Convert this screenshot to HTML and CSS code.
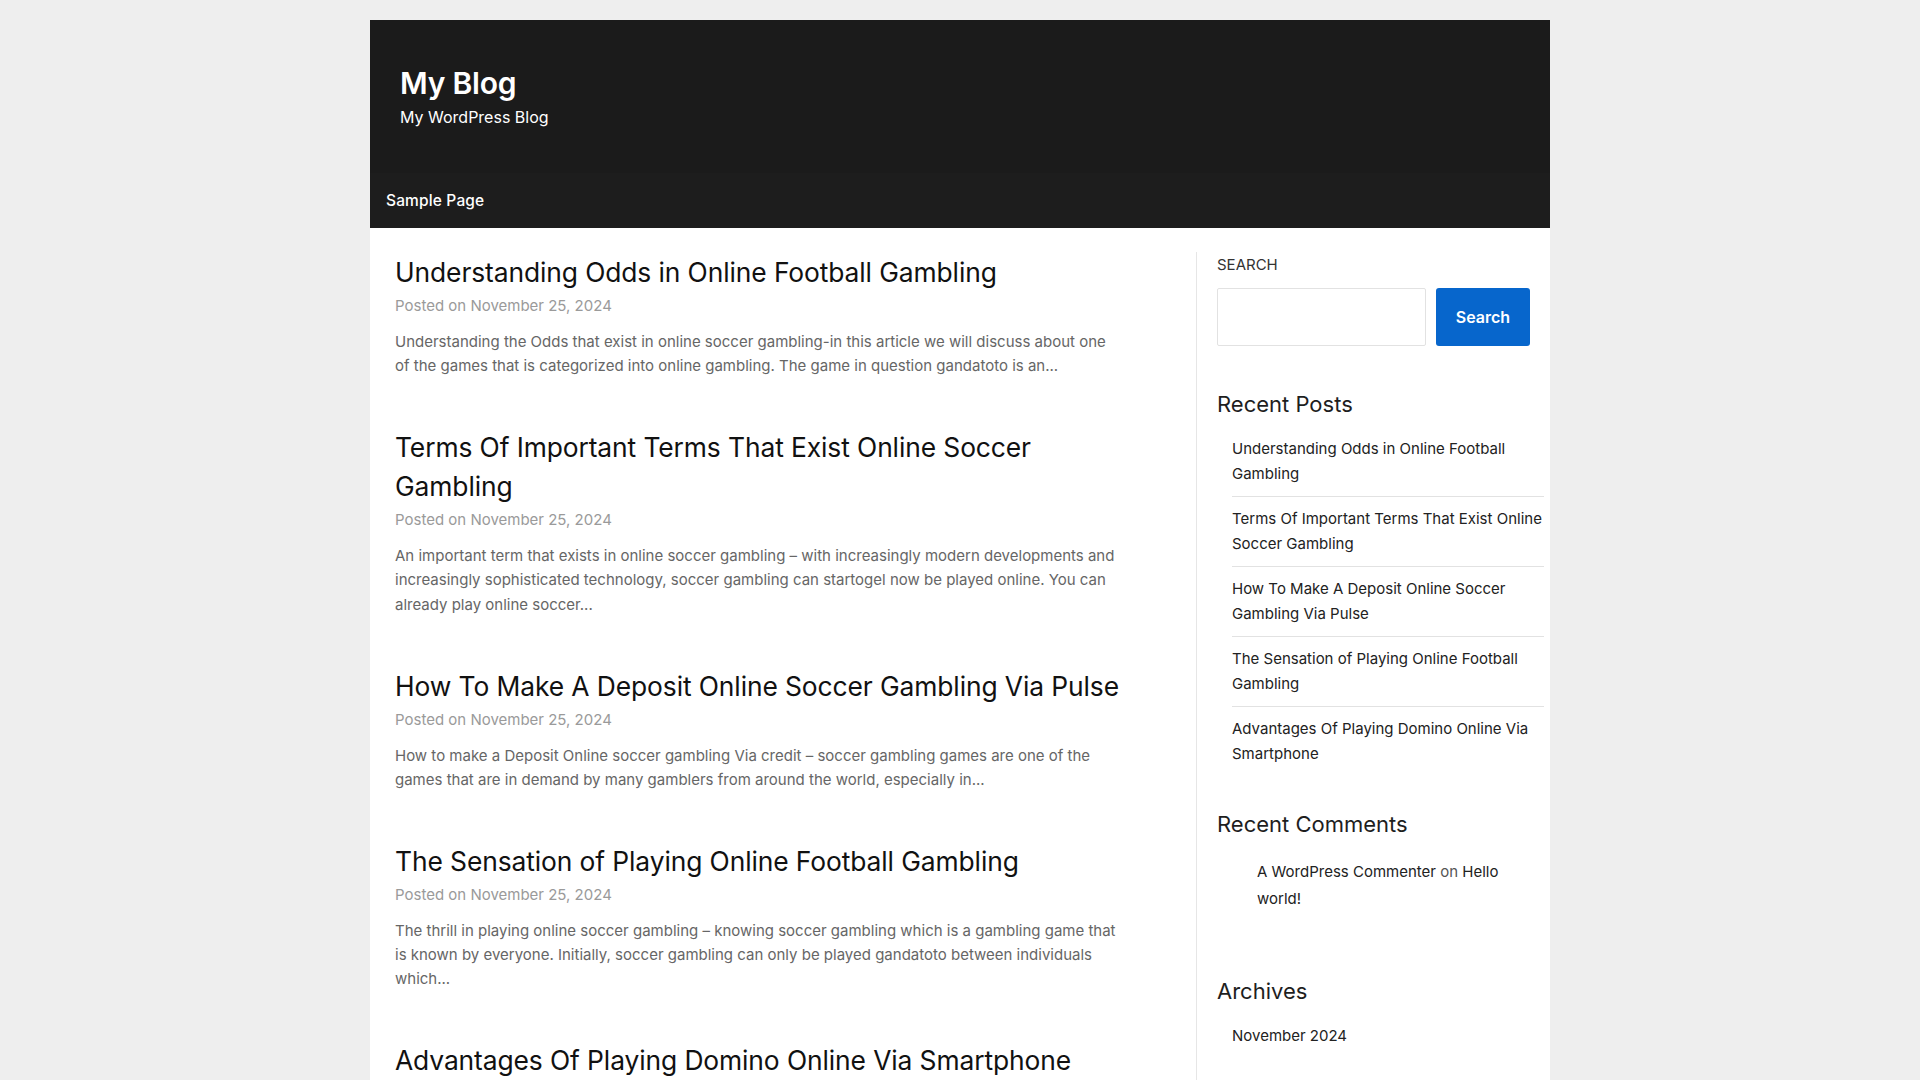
FILE: index.html
```html
<!DOCTYPE html>
<html lang="en">
<head>
<meta charset="utf-8">
<title>My Blog – My WordPress Blog</title>
<link rel="stylesheet" href="styles.css">
</head>
<body>
<div class="page">
  <header class="site-header">
    <div class="branding">
      <h1 class="site-title">My Blog</h1>
      <p class="site-tagline">My WordPress Blog</p>
    </div>
    <nav class="main-nav">
      <a href="#" class="nav-link">Sample Page</a>
    </nav>
  </header>

  <div class="content-row">
    <main class="main-col">
      <article class="post">
        <h2 class="post-title">Understanding Odds in Online Football Gambling</h2>
        <div class="post-meta">Posted on November 25, 2024</div>
        <p class="post-excerpt">Understanding the Odds that exist in online soccer gambling-in this article we will discuss about one of the games that is categorized into online gambling. The game in question gandatoto is an...</p>
      </article>
      <article class="post">
        <h2 class="post-title">Terms Of Important Terms That Exist Online Soccer Gambling</h2>
        <div class="post-meta">Posted on November 25, 2024</div>
        <p class="post-excerpt">An important term that exists in online soccer gambling – with increasingly modern developments and increasingly sophisticated technology, soccer gambling can startogel now be played online. You can already play online soccer...</p>
      </article>
      <article class="post">
        <h2 class="post-title">How To Make A Deposit Online Soccer Gambling Via Pulse</h2>
        <div class="post-meta">Posted on November 25, 2024</div>
        <p class="post-excerpt">How to make a Deposit Online soccer gambling Via credit – soccer gambling games are one of the games that are in demand by many gamblers from around the world, especially in...</p>
      </article>
      <article class="post">
        <h2 class="post-title">The Sensation of Playing Online Football Gambling</h2>
        <div class="post-meta">Posted on November 25, 2024</div>
        <p class="post-excerpt">The thrill in playing online soccer gambling – knowing soccer gambling which is a gambling game that is known by everyone. Initially, soccer gambling can only be played gandatoto between individuals which...</p>
      </article>
      <article class="post">
        <h2 class="post-title">Advantages Of Playing Domino Online Via Smartphone</h2>
        <div class="post-meta">Posted on November 25, 2024</div>
        <p class="post-excerpt">Advantages of playing domino online via smartphone – domino games are one of the card games that are very popular and are often played by many people...</p>
      </article>
    </main>

    <aside class="sidebar">
      <section class="widget widget-search">
        <div class="search-label">SEARCH</div>
        <form class="search-form">
          <input class="search-input" type="text" aria-label="Search">
          <button class="search-button" type="button">Search</button>
        </form>
      </section>

      <section class="widget">
        <h3 class="widget-title">Recent Posts</h3>
        <ul class="post-list">
          <li><a href="#">Understanding Odds in Online Football Gambling</a></li>
          <li><a href="#">Terms Of Important Terms That Exist Online Soccer Gambling</a></li>
          <li><a href="#">How To Make A Deposit Online Soccer Gambling Via Pulse</a></li>
          <li><a href="#">The Sensation of Playing Online Football Gambling</a></li>
          <li><a href="#">Advantages Of Playing Domino Online Via Smartphone</a></li>
        </ul>
      </section>

      <section class="widget widget-comments">
        <h3 class="widget-title">Recent Comments</h3>
        <ul class="comment-list">
          <li><a href="#">A WordPress Commenter</a> <span class="on">on</span> <a href="#">Hello world!</a></li>
        </ul>
      </section>

      <section class="widget">
        <h3 class="widget-title">Archives</h3>
        <ul class="archive-list">
          <li><a href="#">November 2024</a></li>
        </ul>
      </section>
    </aside>
  </div>
</div>
</body>
</html>
```

FILE: styles.css
```css
* { box-sizing: border-box; }

html, body {
  margin: 0;
  padding: 0;
}

body {
  background: #eeeeee;
  font-family: Inter, "Noto Sans", "Liberation Sans", sans-serif;
  color: #222;
}

a { color: inherit; text-decoration: none; }

.page {
  width: 1180px;
  margin: 20px auto 0;
  background: #ffffff;
}

/* Header */
.site-header {
  background: #1b1b1b;
  color: #ffffff;
}

.branding {
  padding: 45px 30px 44px 30px;
}

.site-title {
  margin: 0;
  font-size: 30px;
  line-height: 36px;
  font-weight: 600;
  letter-spacing: -0.2px;
}

.site-tagline {
  margin: 4px 0 0;
  font-size: 16px;
  line-height: 24px;
  font-weight: 400;
}

.main-nav {
  background: #1d1d1d;
  height: 55px;
  display: flex;
  align-items: center;
  padding: 0 16px;
}

.nav-link {
  color: #ffffff;
  font-size: 15.5px;
  font-weight: 500;
  letter-spacing: 0.15px;
}

/* Content */
.content-row {
  display: flex;
  padding-top: 24px;
  align-items: flex-start;
}

.main-col {
  width: 826px;
  padding: 1px 72px 0 25px;
}

.post {
  margin-bottom: 49.6px;
}

.post-title {
  margin: 0;
  font-size: 26.4px;
  line-height: 39px;
  font-weight: 400;
  color: #111;
  letter-spacing: -0.1px;
}

.post-meta {
  margin-top: 2px;
  font-size: 15px;
  line-height: 24px;
  color: #9a9a9a;
}

.post-excerpt {
  margin: 12px 0 0;
  font-size: 15px;
  line-height: 24.3px;
  color: #666;
}

/* Sidebar */
.sidebar {
  width: 354px;
  border-left: 1px solid #e6e6e6;
  padding: 0 6px 40px 20px;
  min-height: 1000px;
}

.widget {
  margin-bottom: 34px;
}

.widget-search {
  margin-bottom: 44px;
}

.search-label {
  font-size: 15px;
  line-height: 24px;
  color: #333;
  margin-top: 1px;
}

.search-form {
  display: flex;
  gap: 10px;
  width: 313px;
  margin-top: 11px;
}

.search-input {
  flex: 1;
  min-width: 0;
  height: 58px;
  border: 1px solid #e2e2e2;
  border-radius: 2px;
  background: #fff;
  font: inherit;
  padding: 0 10px;
}

.search-button {
  width: 94px;
  height: 58px;
  border: none;
  border-radius: 3px;
  background: #0766cc;
  color: #fff;
  font-family: inherit;
  font-size: 16px;
  font-weight: 600;
  cursor: pointer;
}

.widget-title {
  margin: 0 0 8px;
  font-size: 22px;
  line-height: 29px;
  font-weight: 400;
  color: #1e1e1e;
}

.post-list,
.archive-list,
.comment-list {
  list-style: none;
  margin: 0;
  padding: 0 0 0 15px;
}

.post-list li,
.archive-list li {
  font-size: 15px;
  line-height: 24.5px;
  padding: 10px 0 10px;
  border-bottom: 1px solid #e2e2e2;
  color: #222;
}

.post-list li:last-child,
.archive-list li:last-child {
  border-bottom: none;
}

.comment-list {
  padding-left: 40px;
  padding-top: 11px;
  padding-bottom: 31px;
}

.comment-list li {
  font-size: 15px;
  line-height: 27px;
  color: #222;
}

.comment-list .on {
  color: #555;
}
```
